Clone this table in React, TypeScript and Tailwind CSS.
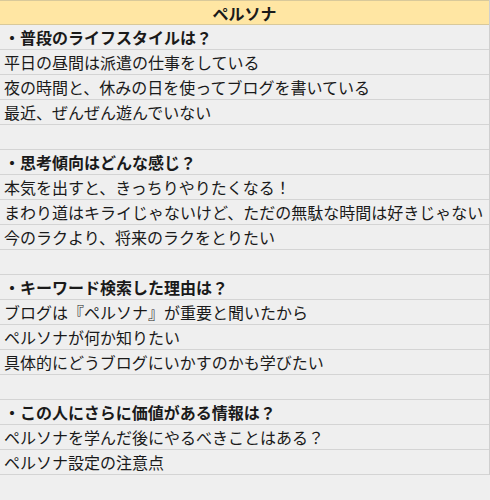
type Row = { text: string; kind: 'head' | 'item' | 'blank' };

const rows: Row[] = [
  { text: '・普段のライフスタイルは？', kind: 'head' },
  { text: '平日の昼間は派遣の仕事をしている', kind: 'item' },
  { text: '夜の時間と、休みの日を使ってブログを書いている', kind: 'item' },
  { text: '最近、ぜんぜん遊んでいない', kind: 'item' },
  { text: '', kind: 'blank' },
  { text: '・思考傾向はどんな感じ？', kind: 'head' },
  { text: '本気を出すと、きっちりやりたくなる！', kind: 'item' },
  { text: 'まわり道はキライじゃないけど、ただの無駄な時間は好きじゃない', kind: 'item' },
  { text: '今のラクより、将来のラクをとりたい', kind: 'item' },
  { text: '', kind: 'blank' },
  { text: '・キーワード検索した理由は？', kind: 'head' },
  { text: 'ブログは『ペルソナ』が重要と聞いたから', kind: 'item' },
  { text: 'ペルソナが何か知りたい', kind: 'item' },
  { text: '具体的にどうブログにいかすのかも学びたい', kind: 'item' },
  { text: '', kind: 'blank' },
  { text: '・この人にさらに価値がある情報は？', kind: 'head' },
  { text: 'ペルソナを学んだ後にやるべきことはある？', kind: 'item' },
  { text: 'ペルソナ設定の注意点', kind: 'item' },
];

export default function App() {
  return (
    <div
      className="w-[490px] h-[500px] bg-[#efefef] text-[#1a1a1a] overflow-hidden"
      style={{ fontFamily: '"Noto Sans CJK JP", "Noto Sans", sans-serif' }}
    >
      <div className="border-r border-[#cfcfcf]">
        <div className="h-[25px] bg-[#ffe6a3] border-t border-b border-[#d9c99a] flex items-center justify-center text-[16px] font-bold leading-none">
          ペルソナ
        </div>
        {rows.map((r, i) => (
          <div
            key={i}
            className={
              r.kind === 'head'
                ? 'h-[25px] border-b border-[#d4d4d4] flex items-center pl-[4px] text-[16px] font-bold leading-none whitespace-nowrap'
                : 'h-[25px] border-b border-[#d4d4d4] flex items-center pl-[4px] text-[16px] leading-none whitespace-nowrap'
            }
          >
            {r.text}
          </div>
        ))}
      </div>
    </div>
  );
}
